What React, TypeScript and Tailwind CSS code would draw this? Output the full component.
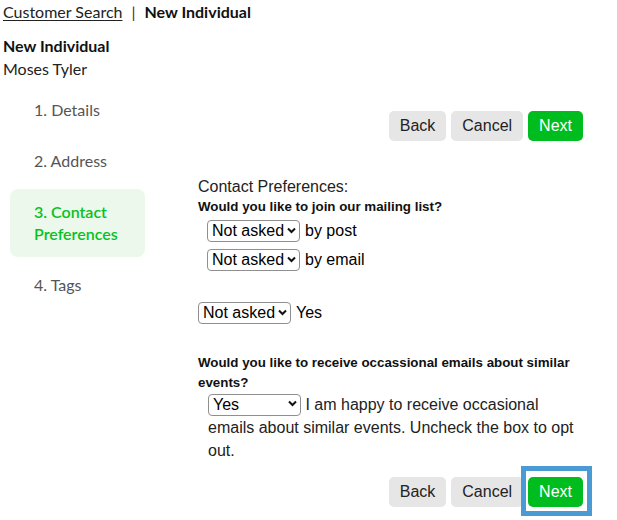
import React from "react";

const sans = { fontFamily: "Lato, 'Noto Sans', sans-serif" } as React.CSSProperties;

function Btn({ children, primary }: { children: React.ReactNode; primary?: boolean }) {
  return (
    <button
      className={
        primary
          ? "h-[30px] px-[11px] rounded-[5px] bg-[#00bd1f] text-white text-[16px] leading-[30px]"
          : "h-[30px] px-[11px] rounded-[5px] bg-[#e6e6e6] text-[#222] text-[16px] leading-[30px]"
      }
    >
      {children}
    </button>
  );
}

function Sel({ value, options }: { value: string; options: string[] }) {
  return (
    <span className="relative inline-block w-[93px] h-[22px] align-top">
      <select
        defaultValue={value}
        className="appearance-none w-[93px] h-[22px] border border-[#8f8f8f] rounded-[4px] bg-white text-[16px] leading-[20px] pl-[4px] pr-[14px] text-black"
      >
        {options.map((o) => (
          <option key={o}>{o}</option>
        ))}
      </select>
      <svg
        className="absolute right-[4px] top-[7px] pointer-events-none"
        width="9"
        height="7"
        viewBox="0 0 9 7"
      >
        <path d="M1 1.5 L4.5 5 L8 1.5" fill="none" stroke="#111" strokeWidth="2" />
      </svg>
    </span>
  );
}

export default function App() {
  return (
    <div className="w-[617px] h-[520px] bg-white text-black overflow-hidden">
      <div className="pl-[3px] h-[24px] flex items-center text-[16px] leading-[24px]" style={sans}>
        <span className="underline underline-offset-2 text-[#222]">Customer Search</span>
        <span className="mx-[9px] text-[#5a1a3a]">|</span>
        <span className="font-bold text-[#111]">New Individual</span>
      </div>
      <div className="pl-[3px] mt-[10px] text-[16px] leading-[23px]" style={sans}>
        <div className="font-bold text-[#111]">New Individual</div>
        <div className="text-[#222]">Moses Tyler</div>
      </div>
      <div className="flex mt-[7px]">
        <nav className="ml-[10px] w-[135px] flex flex-col gap-[5px] text-[16px] leading-[22px]" style={sans}>
          <div className="px-6 py-3 text-[#555]">1. Details</div>
          <div className="px-6 py-3 text-[#555]">2. Address</div>
          <div className="px-6 py-3 rounded-[8px] bg-[#edf8ec] text-[#05c21e] font-semibold">
            3. Contact Preferences
          </div>
          <div className="px-6 py-3 text-[#555]">4. Tags</div>
        </nav>
        <div
          className="ml-[53px] w-[385px] flex flex-col"
          style={{ fontFamily: "'Liberation Sans', Arial, sans-serif" }}
        >
          <div className="mt-[24px] flex justify-end gap-[5px]">
            <Btn>Back</Btn>
            <Btn>Cancel</Btn>
            <Btn primary>Next</Btn>
          </div>
          <div className="mt-[36px] text-[16px] leading-[20px] text-[#222]">Contact Preferences:</div>
          <div className="text-[13.33px] leading-[20px] font-bold text-[#111]">
            Would you like to join our mailing list?
          </div>
          <div className="mt-[3px] ml-[9px] flex items-center h-[22px] text-[16px] leading-[22px]">
            <Sel value="Not asked" options={["Not asked", "Yes", "No"]} />
            <span className="ml-[5px]">by post</span>
          </div>
          <div className="mt-[7px] ml-[9px] flex items-center h-[22px] text-[16px] leading-[22px]">
            <Sel value="Not asked" options={["Not asked", "Yes", "No"]} />
            <span className="ml-[5px]">by email</span>
          </div>
          <div className="mt-[31px] flex items-center h-[22px] text-[16px] leading-[22px]">
            <Sel value="Not asked" options={["Not asked", "Yes", "No"]} />
            <span className="ml-[5px]">Yes</span>
          </div>
          <div className="mt-[29px] text-[13.33px] leading-[20px] font-bold text-[#111]">
            Would you like to receive occassional emails about similar events?
          </div>
          <div className="pl-[10px] text-[16px] leading-[23px] text-[#222]">
            <Sel value="Yes" options={["Yes", "No"]} /> I am happy to receive occasional emails about
            similar events. Uncheck the box to opt out.
          </div>
          <div className="mt-[15px] flex justify-end gap-[5px]">
            <Btn>Back</Btn>
            <Btn>Cancel</Btn>
            <div className="relative">
              <span className="absolute left-[-7px] right-[-9px] top-[-11px] bottom-[-9px] border-[5px] border-[#4a9bd3] pointer-events-none" />
              <Btn primary>Next</Btn>
            </div>
          </div>
        </div>
      </div>
    </div>
  );
}
